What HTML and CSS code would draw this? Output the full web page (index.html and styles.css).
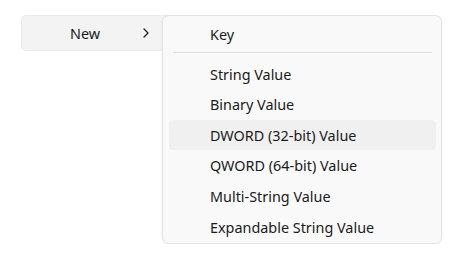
FILE: index.html
```html
<!DOCTYPE html>
<html lang="en">
<head>
  <meta charset="UTF-8" />
  <title>New menu</title>
  <link rel="stylesheet" href="styles.css">
</head>
<body>
  <div class="stage">
    <div class="parent-item">
      <span class="parent-label">New</span>
      <svg class="chevron" width="8" height="10" viewBox="0 0 8 10">
        <path d="M2 1 L6 5 L2 9" fill="none" stroke="#1b1b1b" stroke-width="1.2" stroke-linecap="round" stroke-linejoin="round"/>
      </svg>
    </div>

    <ul class="submenu">
      <li class="item">Key</li>
      <li class="sep"></li>
      <li class="item">String Value</li>
      <li class="item">Binary Value</li>
      <li class="item hover">DWORD (32-bit) Value</li>
      <li class="item">QWORD (64-bit) Value</li>
      <li class="item">Multi-String Value</li>
      <li class="item">Expandable String Value</li>
    </ul>
  </div>
</body>
</html>
```

FILE: styles.css
```css
html, body {
  margin: 0;
  background: #ffffff;
}
body {
  font-family: "Noto Sans", "Open Sans", sans-serif;
  font-size: 14.4px;
  color: #1b1b1b;
}
.stage {
  display: flex;
  align-items: flex-start;
  padding: 15px 0 0 21px;
}
.parent-item {
  display: flex;
  align-items: center;
  width: 150px;
  height: 36px;
  margin-right: -9px;
  box-sizing: border-box;
  background: #f3f3f3;
  border: 1px solid #ebebeb;
  border-right: none;
  border-radius: 5px 0 0 5px;
  padding-left: 48px;
}
.parent-label {
  width: 72px;
}
.chevron {
  display: block;
}
.submenu {
  position: relative;
  list-style: none;
  margin: 0;
  padding: 3px 5px 4px 6px;
  width: 280px;
  height: 229px;
  box-sizing: border-box;
  background: #f9f9f9;
  border: 1px solid #e3e3e3;
  border-radius: 7px;
  box-shadow: 0 1px 3px rgba(0, 0, 0, 0.06);
}
.item {
  height: 30.6px;
  box-sizing: border-box;
  padding-top: 2px;
  line-height: 28.6px;
  padding-left: 41px;
  border-radius: 4px;
  white-space: nowrap;
}
.item.hover {
  background: #f0f0f0;
}
.sep {
  height: 1px;
  background: #dcdcdc;
  margin: 2px 4px 6px 4px;
}
```
